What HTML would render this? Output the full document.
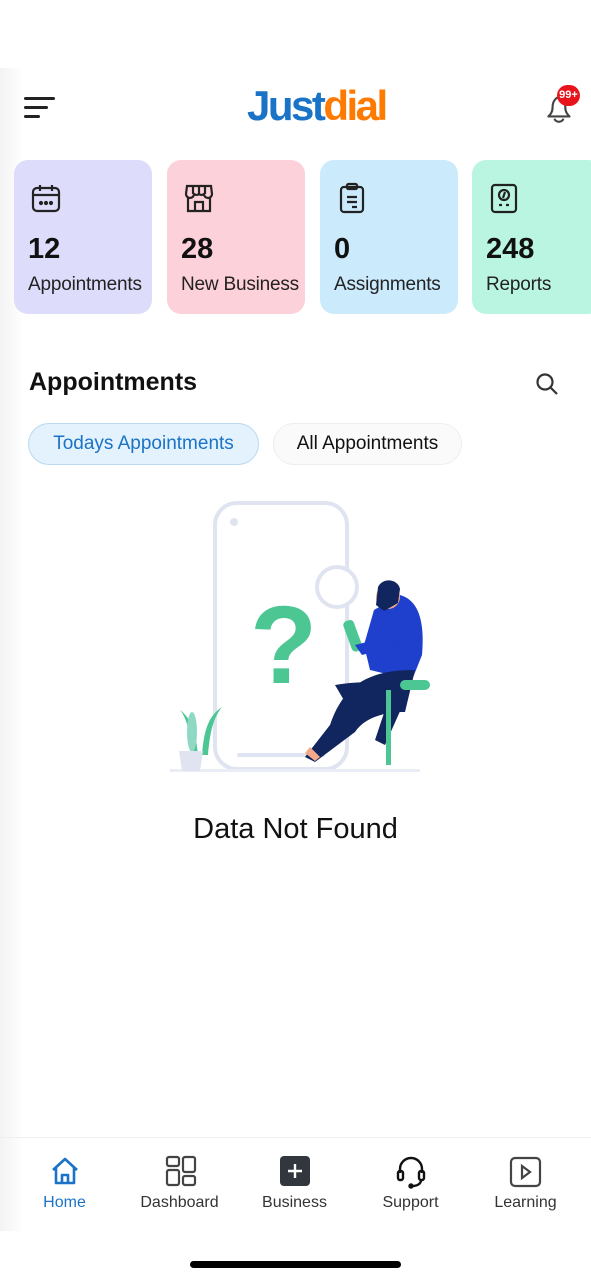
<!DOCTYPE html>
<html><head><meta charset="utf-8"><style>
*{margin:0;padding:0;box-sizing:border-box}
body{width:591px;height:1280px;background:#fff;font-family:"Liberation Sans",sans-serif;position:relative;overflow:hidden;color:#111}
.abs{position:absolute}
.side{position:absolute;left:0;top:68px;width:24px;height:1163px;background:linear-gradient(90deg,#f3f3f3,#fff)}
.card{position:absolute;top:160px;width:138px;height:154px;border-radius:14px}
.card svg{position:absolute;left:16px;top:22px}
.num{position:absolute;left:14px;top:73px;font-size:29px;font-weight:bold;color:#111}
.lbl{position:absolute;left:14px;top:114px;font-size:19px;color:#222;white-space:nowrap;letter-spacing:-0.2px}
.tab{position:absolute;top:423px;height:42px;border-radius:21px;font-size:19px;line-height:40px;text-align:center;white-space:nowrap}
.nav{position:absolute;top:1194px;width:115px;text-align:center;font-size:16px;color:#333}
</style></head><body>
<div class="side"></div>
<svg class="abs" style="left:24px;top:96px" width="32" height="24"><rect x="0" y="1" width="31" height="3" rx="1.5" fill="#222"/><rect x="0" y="10" width="24" height="3" rx="1.5" fill="#222"/><rect x="0" y="19" width="16" height="3" rx="1.5" fill="#222"/></svg>
<div class="abs" style="left:247px;top:82px;font-size:42px;font-weight:bold;letter-spacing:-2.5px"><span style="color:#1a73c6">Just</span><span style="color:#ff7a00">dial</span></div>
<svg class="abs" style="left:543px;top:90px" width="34" height="36" viewBox="0 0 32 34"><path d="M15 4v2M5 25c2-2 4-4 4-9 0-5 3-9 6-9s6 4 6 9c0 5 2 7 4 9z" fill="none" stroke="#444" stroke-width="2" stroke-linejoin="round"/><path d="M11 27a4 3 0 0 0 8 0" fill="none" stroke="#444" stroke-width="2"/></svg>
<div class="abs" style="left:557px;top:85px;width:23px;height:21px;border-radius:11px;background:#e8141c;color:#fff;font-size:11px;font-weight:bold;text-align:center;line-height:21px">99+</div>
<div class="card" style="left:14px;background:#dedcfb">
<svg width="32" height="32" viewBox="0 0 32 32" fill="none" stroke="#222" stroke-width="2.2"><rect x="3" y="6" width="26" height="23" rx="4"/><path d="M3 13h26M10 3v6M22 3v6"/><circle cx="11" cy="21" r="1" fill="#222"/><circle cx="16" cy="21" r="1" fill="#222"/><circle cx="21" cy="21" r="1" fill="#222"/></svg>
<div class="num">12</div><div class="lbl">Appointments</div></div>
<div class="card" style="left:167px;background:#fdd1da">
<svg width="32" height="32" viewBox="0 0 32 32" fill="none" stroke="#222" stroke-width="2.2"><path d="M4 4h24l1 8a4 4 0 0 1-8 0 4 4 0 0 1-5 0 4 4 0 0 1-5 0 4 4 0 0 1-8 0zM10 4v8M16 4v8M22 4v8M5 15v14h22V15M12 29v-9h8v9"/></svg>
<div class="num">28</div><div class="lbl">New Business</div></div>
<div class="card" style="left:320px;background:#cbeafc">
<svg width="32" height="32" viewBox="0 0 32 32" fill="none" stroke="#222" stroke-width="2.2"><rect x="5" y="5" width="22" height="25" rx="3"/><rect x="11" y="2" width="10" height="5" rx="1.5"/><path d="M11 15h10M11 20h10M16 25h5"/></svg>
<div class="num">0</div><div class="lbl">Assignments</div></div>
<div class="card" style="left:472px;width:130px;background:#b9f5e1">
<svg width="32" height="32" viewBox="0 0 32 32" fill="none" stroke="#222" stroke-width="2.2"><rect x="4" y="3" width="24" height="27" rx="3"/><circle cx="16" cy="13" r="5"/><path d="M17 10l-2 6M11 23h3M18 23h3"/></svg>
<div class="num">248</div><div class="lbl">Reports</div></div>
<div class="abs" style="left:29px;top:368px;font-size:25px;font-weight:bold;color:#111">Appointments</div>
<svg class="abs" style="left:535px;top:372px" width="24" height="24" fill="none" stroke="#333" stroke-width="2.2"><circle cx="10" cy="10" r="7.5"/><path d="M16 16l6 6"/></svg>
<div class="tab" style="left:28px;width:231px;background:#e3f2fd;border:1px solid #b9d9f0;color:#1a73c6">Todays Appointments</div>
<div class="tab" style="left:273px;width:189px;background:#fafafa;border:1px solid #eee;color:#111">All Appointments</div>
<svg class="abs" style="left:160px;top:495px" width="270" height="285" viewBox="0 0 270 285">
<rect x="55" y="8" width="132" height="266" rx="22" fill="none" stroke="#dfe4f0" stroke-width="4"/>
<circle cx="74" cy="27" r="4" fill="#dfe4f0"/>
<rect x="77" y="258" width="88" height="4" rx="2" fill="#dfe4f0"/>
<rect x="10" y="274" width="250" height="3" fill="#e9edf5"/>
<text x="90" y="188" font-size="110" font-weight="bold" fill="#4cc793" font-family="Liberation Sans,sans-serif">?</text>
<circle cx="177" cy="92" r="20" fill="#fff" stroke="#dfe4f0" stroke-width="4"/>
<rect x="187" y="125" width="11" height="32" rx="4" fill="#4cc793" transform="rotate(-20 192 140)"/>
<path d="M240 100c18 5 25 25 22 60l-10 25-42-10-6-25 10-35z" fill="#1f3fcd"/>
<path d="M195 150l40-10 5 10-38 10z" fill="#1f3fcd"/>
<circle cx="228" cy="102" r="12" fill="#f4a98a"/>
<path d="M218 92c5-10 20-8 22 2l-2 14-14 8-8-6z" fill="#11255e"/>
<path d="M255 175c-40 0-70 10-85 55l-25 32 10 5 40-30c10-15 30-20 50-20z" fill="#11255e"/>
<path d="M175 190c30-5 60-5 70 15l-20 45-10-5 10-30-40-8z" fill="#11255e"/>
<rect x="240" y="185" width="30" height="10" rx="5" fill="#4cc793"/>
<rect x="226" y="195" width="5" height="75" fill="#4cc793"/>
<path d="M145 258l10 8 5-4-10-10z" fill="#f4a98a"/>
<path d="M20 215c8 10 10 25 12 45h6c-2-20-5-35-18-45z" fill="#4cc793"/>
<path d="M62 212c-12 8-18 20-20 48h6c2-25 6-38 14-48z" fill="#4cc793"/>
<ellipse cx="32" cy="237" rx="5" ry="20" fill="#8fd9c4"/>
<path d="M19 256h24l-3 20H22z" fill="#dfe4f0"/>
</svg>
<div class="abs" style="left:0;width:591px;top:813px;text-align:center;font-size:29px;color:#111">Data Not Found</div>
<div class="abs" style="left:0;top:1137px;width:591px;height:1px;background:#eee"></div>
<svg class="abs" style="left:49px;top:1155px" width="32" height="32" fill="none" stroke="#1a73c6" stroke-width="2.6" stroke-linejoin="round"><path d="M4 15L16 4l12 11M7 13v15h18V13M13 28v-8h6v8"/></svg>
<svg class="abs" style="left:165px;top:1155px" width="32" height="32" fill="none" stroke="#444" stroke-width="2.2"><rect x="2" y="2" width="12" height="9" rx="2"/><rect x="2" y="15" width="12" height="15" rx="2"/><rect x="18" y="2" width="12" height="15" rx="2"/><rect x="18" y="21" width="12" height="9" rx="2"/></svg>
<svg class="abs" style="left:279px;top:1155px" width="32" height="32"><rect x="1" y="1" width="30" height="30" rx="4" fill="#32373d"/><path d="M16 9v14M9 16h14" stroke="#fff" stroke-width="2.4"/></svg>
<svg class="abs" style="left:395px;top:1155px" width="32" height="34" fill="none" stroke="#111" stroke-width="2.4"><path d="M5 18v-4a11 11 0 0 1 22 0v4"/><rect x="3" y="16" width="5" height="9" rx="2"/><rect x="24" y="16" width="5" height="9" rx="2"/><path d="M26 25c0 4-4 6-9 6"/><circle cx="16" cy="31" r="1.5" fill="#111"/></svg>
<svg class="abs" style="left:509px;top:1156px" width="34" height="32" fill="none" stroke="#444" stroke-width="2.2"><rect x="2" y="2" width="29" height="28" rx="4"/><path d="M13 10l8 6-8 6z"/></svg>
<div class="nav" style="left:7px;color:#1a73c6">Home</div>
<div class="nav" style="left:122px">Dashboard</div>
<div class="nav" style="left:237px">Business</div>
<div class="nav" style="left:353px">Support</div>
<div class="nav" style="left:468px">Learning</div>
<div class="abs" style="left:190px;top:1261px;width:211px;height:7px;border-radius:4px;background:#000"></div>
</body></html>
